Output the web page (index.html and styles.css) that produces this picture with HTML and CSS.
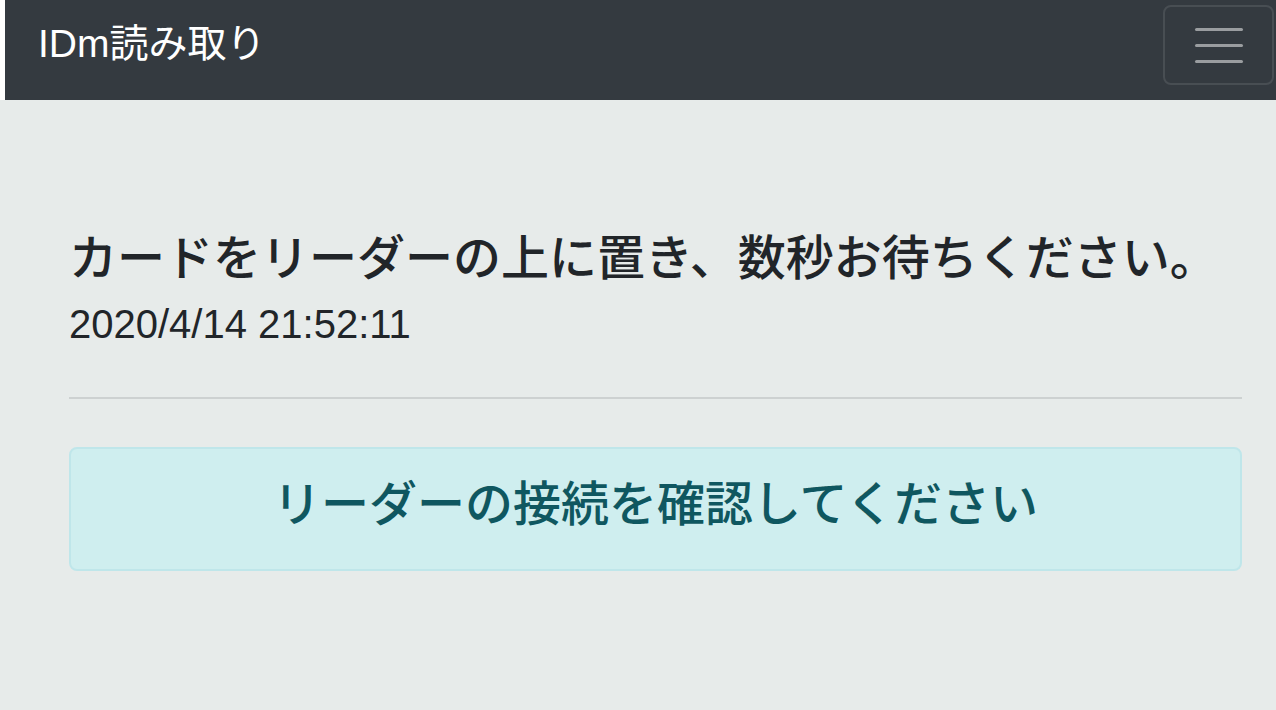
FILE: index.html
```html
<!DOCTYPE html>
<html lang="ja">
<head>
  <meta charset="UTF-8">
  <meta name="viewport" content="width=device-width, initial-scale=1.0">
  <title>IDm読み取り</title>
  <link rel="stylesheet" href="styles.css">
</head>
<body>
  <header id="header">
    <nav class="navbar">
      <span class="brand">IDm読み取り</span>
      <button class="toggler" type="button" aria-label="menu">
        <span class="toggler-bar"></span>
        <span class="toggler-bar"></span>
        <span class="toggler-bar"></span>
      </button>
    </nav>
  </header>
  <div id="container">
    <h1 class="message">カードをリーダーの上に置き、数秒お待ちください。</h1>
    <p class="clock">2020/4/14 21:52:11</p>
    <hr class="divider">
    <div class="alert-info">リーダーの接続を確認してください</div>
  </div>
</body>
</html>
```

FILE: styles.css
```css
body {
  margin: 0;
  background-color: #e7ebea;
  color: #212529;
  font-family: 'Liberation Sans', Arial, 'Noto Sans CJK JP', sans-serif;
}

#header {
  background-color: #fff;
  padding-left: 5px;
}

.navbar {
  background-color: #343a40;
  height: 100px;
  display: flex;
  align-items: flex-start;
  justify-content: space-between;
  padding: 0 2px 0 33px;
  box-sizing: border-box;
}

.brand {
  color: #fff;
  font-size: 39px;
  line-height: 88px;
  white-space: nowrap;
}

.toggler {
  margin-top: 5px;
  width: 111px;
  height: 80px;
  background: transparent;
  border: 2px solid rgba(255, 255, 255, 0.1);
  border-radius: 8px;
  display: flex;
  flex-direction: column;
  align-items: center;
  justify-content: center;
  gap: 13px;
  padding: 0;
  cursor: pointer;
}

.toggler-bar {
  display: block;
  width: 48px;
  height: 3px;
  border-radius: 2px;
  background-color: #9a9da0;
}

#container {
  padding: 126px 34px 0 69px;
}

.message {
  margin: 0;
  font-family: 'Noto Sans CJK JP', sans-serif;
  font-size: 48px;
  font-weight: 500;
  line-height: 56px;
  white-space: nowrap;
}

.clock {
  margin: 19px 0 0;
  font-size: 40px;
  line-height: 46px;
}

.divider {
  margin: 50px 0 0;
  border: 0;
  border-top: 2px solid #cdd1d1;
}

.alert-info {
  margin-top: 48px;
  height: 124px;
  box-sizing: border-box;
  background-color: #cfeeef;
  border: 2px solid #bfe6ea;
  border-radius: 8px;
  color: #0f5760;
  font-family: 'Noto Sans CJK JP', sans-serif;
  font-size: 48px;
  font-weight: 500;
  display: flex;
  align-items: center;
  justify-content: center;
  padding-bottom: 18px;
}
```
